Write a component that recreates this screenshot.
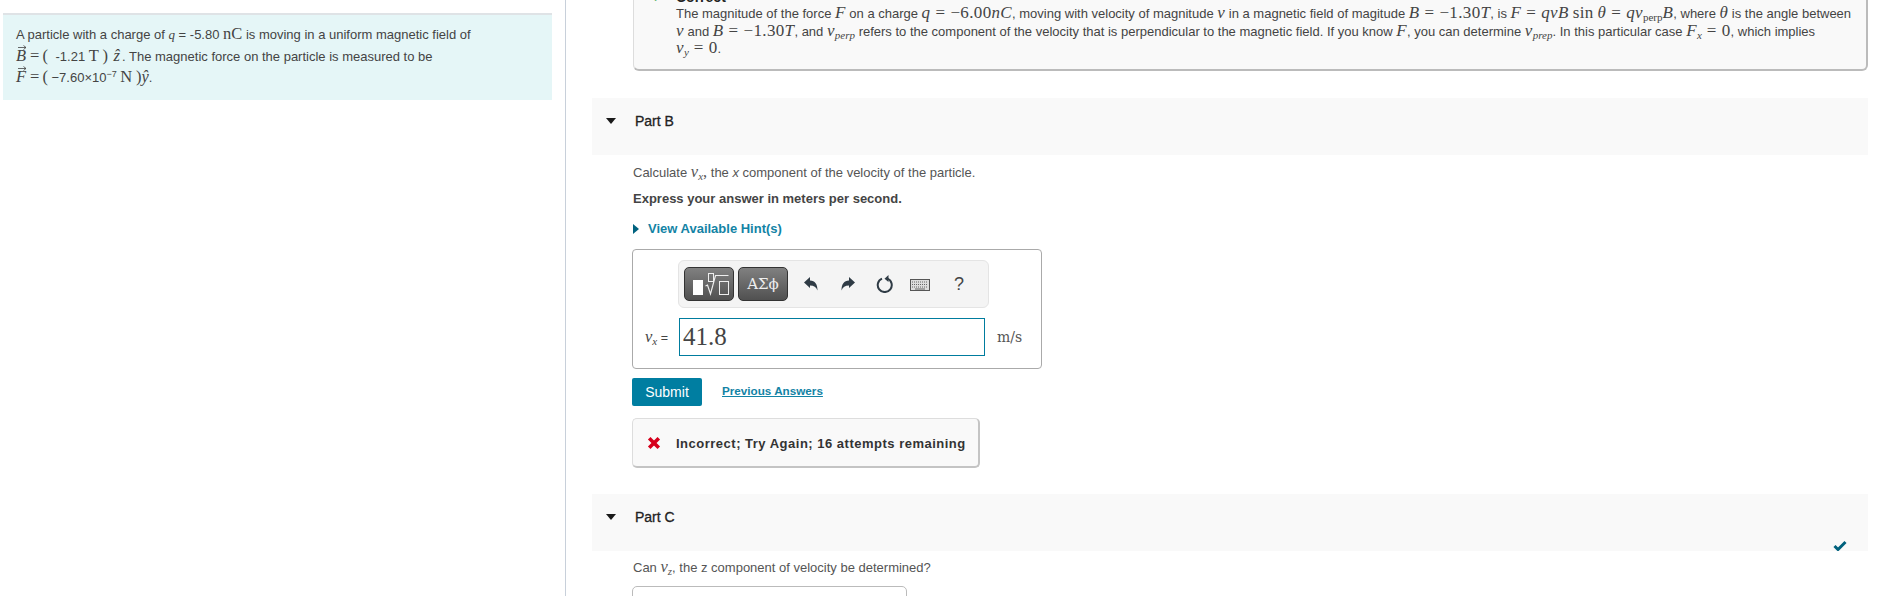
<div class="page">
  <aside class="left">
    <div class="intro">
      <p>A particle with a charge of <i class="m">q</i> = -5.80 <span class="r big">nC</span> is moving in a uniform magnetic field of</p>
      <p><span class="vec"><i class="m big">B</i><svg class="arrow" width="9" height="5" viewBox="0 0 9 5"><path d="M0 2.500h8M5.500 .5l2.500 2-2.500 2" fill="none" stroke="#444" stroke-width=".8"/></svg></span><span class="r big eq">=</span><span class="r big paren">(</span> -1.21 <span class="r big">T</span> <span class="r big">)</span> <i class="m big hat">ẑ</i>. The magnetic force on the particle is measured to be</p>
      <p><span class="vec"><i class="m big">F</i><svg class="arrow" width="9" height="5" viewBox="0 0 9 5"><path d="M0 2.500h8M5.500 .5l2.500 2-2.500 2" fill="none" stroke="#444" stroke-width=".8"/></svg></span><span class="r big eq">=</span><span class="r big">(</span> −7.60×10<sup>−7</sup> <span class="r big">N</span> <span class="r big">)</span><i class="m big">ŷ</i>.</p>
    </div>
  </aside>

  <main class="right">
    <section class="correct">
      <div class="correct-head"><span class="gcheck">✓</span><strong>Correct</strong></div>
      <div class="sol">
        <p>The magnitude of the force <i class="m big">F</i> on a charge <i class="m big">q</i><span class="r big eq">=</span><span class="r big">−6.00</span><i class="m big">nC</i>, moving with velocity of magnitude <i class="m big">v</i> in a magnetic field of magitude <i class="m big">B</i><span class="r big eq">=</span><span class="r big">−1.30</span><i class="m big">T</i>, is <i class="m big">F</i><span class="r big eq">=</span><i class="m big">qvB</i><span class="r big sin">sin</span><i class="m big">θ</i><span class="r big eq">=</span><i class="m big">qv</i><sub class="r">perp</sub><i class="m big">B</i>, where <i class="m big">θ</i> is the angle between</p>
        <p><i class="m big">v</i> and <i class="m big">B</i><span class="r big eq">=</span><span class="r big">−1.30</span><i class="m big">T</i>, and <i class="m big">v</i><sub class="m">perp</sub> refers to the component of the velocity that is perpendicular to the magnetic field. If you know <i class="m big">F</i>, you can determine <i class="m big">v</i><sub class="m">prep</sub>. In this particular case <i class="m big">F</i><sub class="m">x</sub><span class="r big eq">=</span><span class="r big">0</span>, which implies</p>
        <p><i class="m big">v</i><sub class="m">y</sub><span class="r big eq">=</span><span class="r big">0</span>.</p>
      </div>
    </section>

    <header class="part part-b">
      <span class="tri"></span><span class="part-name">Part B</span>
    </header>

    <div class="body">
      <p class="q">Calculate <i class="m big">v</i><sub class="m">x</sub><span class="r big">,</span> the <i>x</i> component of the velocity of the particle.</p>
      <p class="express">Express your answer in meters per second.</p>
      <div class="hint"><span class="hint-tri"></span>View Available Hint(s)</div>

      <div class="answer">
        <div class="toolbar">
          <button class="tb" aria-label="templates">
            <svg width="48" height="32" viewBox="0 0 48 32">
              <rect x="8" y="12" width="10" height="15" fill="#fff"/>
              <rect x="23.500" y="5.500" width="5" height="8" fill="none" stroke="#eee"/>
              <path d="M20.500 18l2-1 3 9 5-18.500h13" fill="none" stroke="#eee" stroke-width="1.200"/>
              <rect x="34.500" y="13.500" width="9" height="13" fill="none" stroke="#eee"/>
            </svg>
          </button>
          <button class="tb greek">ΑΣϕ</button>
          <span class="ic ic-undo"><svg width="16" height="16" viewBox="0 0 16 16"><path d="M1 6.500l6-5.500v3.400c5 .2 7.500 3.600 7.500 10-1.300-3.500-3.500-5-7.500-5v2.600z" fill="#2f3b45"/></svg></span>
          <span class="ic ic-redo"><svg width="16" height="16" viewBox="0 0 16 16"><path d="M15 6.500l-6-5.500v3.400c-5 .2-7.500 3.600-7.500 10 1.300-3.500 3.500-5 7.500-5v2.600z" fill="#2f3b45"/></svg></span>
          <span class="ic ic-reset"><svg width="18" height="18" viewBox="0 0 18 18"><path d="M6 3.600a7 7 0 1 0 5.500 0" fill="none" stroke="#2f3b45" stroke-width="2"/><path d="M12.500 0v7l-4-3.200z" fill="#2f3b45"/></svg></span>
          <span class="ic ic-kb"><svg width="20" height="12" viewBox="0 0 20 12"><rect x=".5" y=".5" width="19" height="11" fill="#ddd" stroke="#555"/><path d="M2 3h16M2 5.500h16M2 8h16" stroke="#666" stroke-dasharray="1 1"/><path d="M5 10h10" stroke="#666"/></svg></span>
          <span class="ic-help">?</span>
        </div>
        <div class="answer-row">
          <span class="lab"><i class="m big">v</i><sub class="m">x</sub> =</span>
          <div class="input">41.8</div>
          <span class="unit">m/s</span>
        </div>
      </div>

      <div class="actions">
        <button class="submit">Submit</button>
        <a class="prev" href="#prev">Previous Answers</a>
      </div>

      <div class="feedback">
        <svg class="x" width="14" height="14" viewBox="0 0 14 14"><path d="M2.200 2.200l9.600 9.600M11.800 2.200l-9.600 9.600" stroke="#d6001c" stroke-width="3.600"/></svg>
        <strong>Incorrect; Try Again; 16 attempts remaining</strong>
      </div>
    </div>

    <header class="part part-c">
      <span class="tri"></span><span class="part-name">Part C</span>
      <svg class="done" width="14" height="11" viewBox="0 0 14 11"><path d="M1.500 6l3.500 3.500 7.500-7.500" fill="none" stroke="#00617d" stroke-width="3"/></svg>
    </header>

    <div class="body">
      <p class="q q-c">Can <i class="m big">v</i><sub class="m">z</sub>, the z component of velocity be determined?</p>
      <div class="next"></div>
    </div>
  </main>
</div>

<style>
  :global(body) { margin: 0; background: #fff; overflow: hidden; }
  p { margin: 0; }
  .page {
    display: flex; height: 596px; overflow: hidden;
    font-family: "Liberation Sans", Arial, sans-serif; color: #444;
  }
  .left {
    width: 566px; flex: none; box-sizing: border-box; padding: 13px 13px 0 3px;
    border-right: 1px solid #c8d0da;
  }
  .intro {
    background: #e5f6f7; border-top: 2px solid #dfe3e6; box-sizing: border-box; height: 87px;
    padding: 8px 13px 0; font-size: 13px; line-height: 21.500px;
  }
  .intro p { white-space: nowrap; height: 21.500px; }
  .intro .eq { margin: 0 3px 0 4px; }
  .paren { margin-right: 4px; }
  .hat { margin: 0 2px 0 2px; }
  .m { font-family: "Liberation Serif", serif; font-style: italic; }
  .r { font-family: "Liberation Serif", serif; }
  .big { font-size: 16.500px; }
  .eq { margin: 0 5px; }
  .sin { margin: 0 4px; }
  .vec { position: relative; display: inline-block; line-height: 14px; }
  .arrow { position: absolute; left: 2px; top: -4px; }
  sup { font-size: 9px; line-height: 0; }
  sub { font-size: 11px; line-height: 0; vertical-align: -3px; }

  .right { flex: 1; min-width: 0; padding: 0 13px 0 26px; }
  .correct {
    margin: -25px 0 0 41px; height: 96px; box-sizing: border-box; background: #f9f9f9;
    border: 1px solid #ddd; border-bottom: 2px solid #bbb; border-right: 2px solid #bbb; border-radius: 6px;
    padding: 0 0 0 42px;
  }
  .correct-head { position: relative; height: 28px; box-sizing: border-box; padding-top: 14px; font-size: 14px; color: #222; line-height: 14px; }
  .gcheck { position: absolute; left: -24px; color: #2a9d3a; }
  .sol { font-size: 13px; color: #444; }
  .sol .big { font-size: 17px; letter-spacing: 0.350px; }
  .sol p { height: 17.500px; line-height: 17.500px; white-space: nowrap; }
  .part { position: relative; background: #f9f9f9; height: 57px; box-sizing: border-box; padding: 16px 0 0 43px; font-size: 14px; color: #222; }
  .part-b { margin-top: 27px; }
  .part-c { margin-top: 26px; }
  .part-name { line-height: 14px; display: block; -webkit-text-stroke: 0.300px #222; }
  .tri {
    position: absolute; left: 14px; top: 20px; width: 0; height: 0;
    border-left: 5px solid transparent; border-right: 5px solid transparent; border-top: 6px solid #1a1a1a;
  }
  .done { position: absolute; right: 21px; bottom: 0; }
  .body { padding-left: 40px; }
  .q { font-size: 13px; line-height: 17px; padding: 8px 0 0 1px; color: #555; }
  .q-c { padding-top: 7px; }
  .express { font-weight: bold; font-size: 13px; line-height: 16px; margin: 10px 0 0 1px; color: #444; }
  .hint { display: flex; align-items: center; font-weight: bold; font-size: 13px; color: #1383a5; margin: 14px 0 0 1px; line-height: 16px; }
  .hint-tri { width: 0; height: 0; border-top: 5px solid transparent; border-bottom: 5px solid transparent; border-left: 6px solid #00627f; margin-right: 9px; }
  .answer {
    margin-top: 12px; width: 410px; height: 120px; box-sizing: border-box;
    border: 1px solid #aaa; border-radius: 4px; padding: 10px 13px 0 12px;
  }
  .toolbar {
    margin-left: 33px; width: 311px; height: 48px; box-sizing: border-box;
    background: #f4f4f4; border: 1px solid #e4e4e4; border-radius: 6px;
    display: flex; align-items: center; padding-left: 5px;
  }
  .tb {
    width: 50px; height: 34px; box-sizing: border-box; padding: 0; margin-right: 4px;
    background: linear-gradient(#808080, #505050); border: 1px solid #333; border-radius: 5px;
    color: #eee; font-family: "DejaVu Serif", "Liberation Serif", serif; font-size: 15px;
    display: flex; align-items: center; justify-content: center;
  }
  .ic { display: flex; align-items: center; justify-content: center; }
  .ic-undo { margin-left: 11px; width: 16px; }
  .ic-redo { margin-left: 21px; width: 16px; }
  .ic-reset { margin-left: 20px; width: 18px; }
  .ic-kb { margin-left: 16px; width: 20px; padding-top: 2px; }
  .ic-help { margin-left: 24px; font-size: 18px; color: #444; }
  .answer-row { display: flex; align-items: center; margin-top: 10px; }
  .lab { width: 34px; flex: none; font-size: 12.500px; white-space: nowrap; }
  .input {
    width: 306px; height: 38px; box-sizing: border-box; border: 1px solid #007c9e;
    font-family: "Liberation Serif", serif; font-size: 25px; line-height: 36px; padding-left: 3px; color: #444;
  }
  .unit { margin-left: 12px; font-family: "DejaVu Serif", serif; font-size: 14px; color: #555; }
  .actions { display: flex; align-items: flex-start; margin-top: 9px; }
  .submit {
    width: 70px; height: 28px; background: #007ea1; border: 0; border-radius: 2px; padding: 0; color: #fff;
    font-family: "Liberation Sans", sans-serif; font-size: 14px; font-weight: 500;
  }
  .prev {
    margin: 5px 0 0 20px; color: #1383a5; font-size: 11.700px; font-weight: bold;
    line-height: 15px; text-decoration: underline;
  }
  .feedback {
    margin-top: 12px; width: 348px; height: 50px; box-sizing: border-box; background: #f9f9f9;
    border: 1px solid #ddd; border-radius: 5px; border-right: 2px solid #c4c4c4; border-bottom: 2px solid #c4c4c4;
    display: flex; align-items: center; padding-left: 14px; font-size: 13px; color: #333;
  }
  .x { margin-right: 15px; flex: none; }
  .feedback strong { letter-spacing: 0.500px; white-space: nowrap; padding-top: 1px; }
  .next { margin-top: 10px; width: 275px; height: 40px; box-sizing: border-box; border: 1px solid #bbb; border-radius: 5px; }
</style>
